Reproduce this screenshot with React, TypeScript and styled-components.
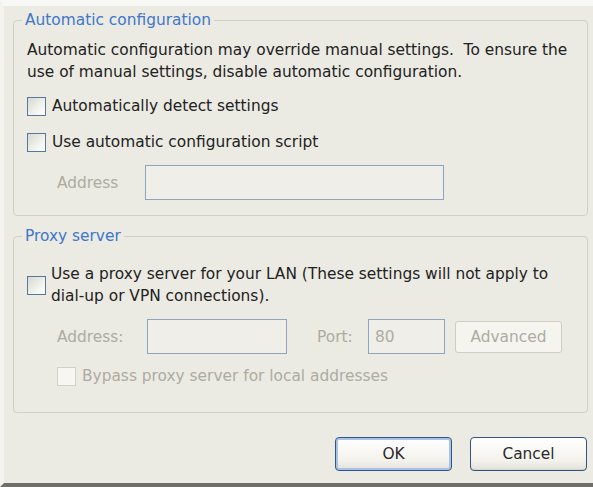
import styled, { createGlobalStyle } from 'styled-components';

const GlobalStyle = createGlobalStyle`
  html, body {
    margin: 0;
    padding: 0;
    background: #ebeae3;
  }
  body {
    font-family: "DejaVu Sans", "Liberation Sans", sans-serif;
    font-size: 15.4px;
    color: #222222;
  }
  * {
    box-sizing: border-box;
  }
`;

const ProxySettings = () => {
  return (
    <Window>
      <GlobalStyle />
      <Body>
        <Group>
          <Caption>Automatic configuration</Caption>
          <Paragraph>
            <Line>Automatic configuration may override manual settings.&nbsp; To ensure the</Line>
            <Line>use of manual settings, disable automatic configuration.</Line>
          </Paragraph>
          <CheckRow $top={11}>
            <Box />
            <span>Automatically detect settings</span>
          </CheckRow>
          <CheckRow $top={12}>
            <Box />
            <span>Use automatic configuration script</span>
          </CheckRow>
          <FieldRow $top={11}>
            <FieldLabel $width={88}>Address</FieldLabel>
            <TextBox $width={299} disabled />
          </FieldRow>
        </Group>

        <Group $top={9} $bottom={24}>
          <Caption>Proxy server</Caption>
          <CheckRow $top={8} $gap={5}>
            <Box />
            <Paragraph>
              <Line>Use a proxy server for your LAN (These settings will not apply to</Line>
              <Line>dial-up or VPN connections).</Line>
            </Paragraph>
          </CheckRow>
          <FieldRow $top={12}>
            <FieldLabel $width={90}>Address:</FieldLabel>
            <TextBox $width={140} disabled />
            <FieldLabel $left={30} $width={51}>Port:</FieldLabel>
            <TextBox $width={77} disabled value="80" readOnly />
            <GhostButton disabled>Advanced</GhostButton>
          </FieldRow>
          <CheckRow $top={10} $indent={30} $disabled>
            <Box $disabled />
            <span>Bypass proxy server for local addresses</span>
          </CheckRow>
        </Group>

        <Actions>
          <PushButton $primary>OK</PushButton>
          <PushButton>Cancel</PushButton>
        </Actions>
      </Body>
    </Window>
  );
};

export default ProxySettings;

const Window = styled.div`
  width: 593px;
  height: 487px;
  display: flex;
  flex-direction: column;
  background: #ebeae3;
  border-top: 6px solid #f8f8f5;
  border-left: 4px solid #f3f2ed;
  border-bottom: 4px solid #6f6e6a;
  overflow: hidden;
`;

const Body = styled.div`
  flex: 1;
  display: flex;
  flex-direction: column;
  padding: 3px 5px 0 9px;
`;

const Group = styled.fieldset<{ $top?: number; $bottom?: number }>`
  margin: ${({ $top }) => $top ?? 0}px 0 0 0;
  padding: 8px 14px ${({ $bottom }) => $bottom ?? 15}px 13px;
  border: 1px solid #d2d0c5;
  border-radius: 4px;
  min-width: 0;
  display: flex;
  flex-direction: column;
`;

const Caption = styled.legend`
  margin-left: -5px;
  padding: 0 3px;
  line-height: 22px;
  color: #3f78c8;
`;

const Paragraph = styled.div`
  display: flex;
  flex-direction: column;
  line-height: 22px;
`;

const Line = styled.span`
  white-space: nowrap;
`;

const CheckRow = styled.label<{ $top?: number; $gap?: number; $indent?: number; $disabled?: boolean }>`
  display: flex;
  align-items: center;
  gap: ${({ $gap }) => $gap ?? 6}px;
  margin-top: ${({ $top }) => $top ?? 0}px;
  margin-left: ${({ $indent }) => $indent ?? 0}px;
  min-height: 24px;
  white-space: nowrap;
  color: ${({ $disabled }) => ($disabled ? '#aeaca2' : 'inherit')};
`;

const Box = styled.span<{ $disabled?: boolean }>`
  flex: none;
  width: 19px;
  height: 19px;
  border: 1px solid ${({ $disabled }) => ($disabled ? '#d3d1c6' : '#56789f')};
  background: ${({ $disabled }) =>
    $disabled ? '#f7f6f1' : 'linear-gradient(135deg, #d8d8d1 0%, #f2f2ee 60%, #ffffff 100%)'};
`;

const FieldRow = styled.div<{ $top?: number }>`
  display: flex;
  align-items: center;
  margin-top: ${({ $top }) => $top ?? 0}px;
  padding-left: 30px;
`;

const FieldLabel = styled.span<{ $width: number; $left?: number }>`
  flex: none;
  width: ${({ $width }) => $width}px;
  margin-left: ${({ $left }) => $left ?? 0}px;
  color: #aeaca2;
`;

const TextBox = styled.input<{ $width: number }>`
  flex: none;
  width: ${({ $width }) => $width}px;
  height: 35px;
  margin: 0;
  padding: 0 6px;
  border: 1px solid #8ea5bf;
  background: #efeee8;
  font: inherit;
  color: #aeaca2;
`;

const GhostButton = styled.button`
  flex: none;
  width: 107px;
  height: 32px;
  margin-left: 10px;
  border: 1px solid #cfcdc2;
  border-radius: 3px;
  background: #f5f4ef;
  font: inherit;
  color: #aeaca2;
`;

const Actions = styled.div`
  display: flex;
  justify-content: flex-end;
  gap: 18px;
  margin-top: 24px;
  padding-right: 1px;
`;

const PushButton = styled.button<{ $primary?: boolean }>`
  width: 117px;
  height: 34px;
  border: 1px solid #33557f;
  border-radius: 4px;
  background: linear-gradient(#ffffff, #f3f2ec 70%, #e2e1da);
  box-shadow: ${({ $primary }) =>
    $primary ? 'inset 0 0 0 2px #a9c2ea' : 'inset 0 -1px 0 #d6d5cc'};
  font: inherit;
  color: #2a2a2a;
`;
